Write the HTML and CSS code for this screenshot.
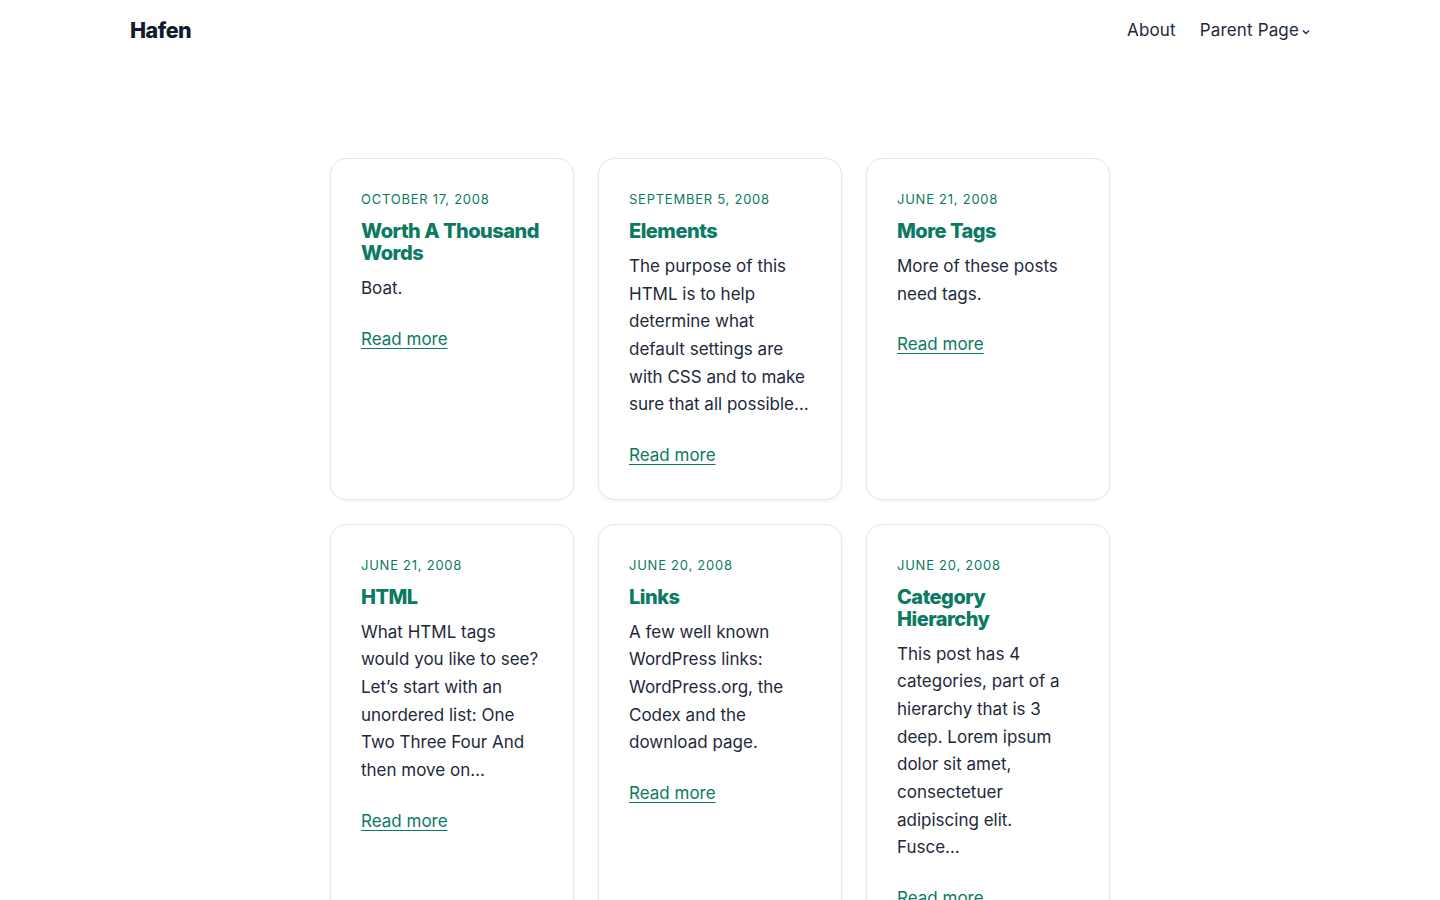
FILE: index.html
```html
<!DOCTYPE html>
<html lang="en">
<head>
    <meta charset="UTF-8">
    <meta name="viewport" content="width=device-width, initial-scale=1.0">
    <title>Hafen</title>
    <link rel="stylesheet" href="styles.css">
</head>
<body>
    <header class="site-header">
        <a class="site-title" href="#">Hafen</a>
        <nav class="site-nav">
            <a href="#">About</a>
            <a href="#" class="has-sub">Parent Page
                <svg class="chevron" width="10" height="12" viewBox="0 0 10 12"><path d="M2 4.5l3 3 3-3" fill="none" stroke="currentColor" stroke-width="1.3"/></svg>
            </a>
        </nav>
    </header>

    <main class="posts">
        <article class="card">
            <p class="date">October 17, 2008</p>
            <h2 class="title">Worth A Thousand Words</h2>
            <p class="excerpt">Boat.</p>
            <a class="more" href="#">Read more</a>
        </article>
        <article class="card">
            <p class="date">September 5, 2008</p>
            <h2 class="title">Elements</h2>
            <p class="excerpt">The purpose of this HTML is to help determine what default settings are with CSS and to make sure that all possible…</p>
            <a class="more" href="#">Read more</a>
        </article>
        <article class="card">
            <p class="date">June 21, 2008</p>
            <h2 class="title">More Tags</h2>
            <p class="excerpt">More of these posts need tags.</p>
            <a class="more" href="#">Read more</a>
        </article>
        <article class="card">
            <p class="date">June 21, 2008</p>
            <h2 class="title">HTML</h2>
            <p class="excerpt">What HTML tags would you like to see? Let’s start with an unordered list: One Two Three Four And then move on…</p>
            <a class="more" href="#">Read more</a>
        </article>
        <article class="card">
            <p class="date">June 20, 2008</p>
            <h2 class="title">Links</h2>
            <p class="excerpt">A few well known WordPress links: WordPress.org, the Codex and the download page.</p>
            <a class="more" href="#">Read more</a>
        </article>
        <article class="card">
            <p class="date">June 20, 2008</p>
            <h2 class="title">Category Hierarchy</h2>
            <p class="excerpt">This post has 4 categories, part of a hierarchy that is 3 deep. Lorem ipsum dolor sit amet, consectetuer adipiscing elit. Fusce…</p>
            <a class="more" href="#">Read more</a>
        </article>
    </main>
</body>
</html>
```

FILE: styles.css
```css
/* 全体 */
body {
    margin: 0;
    background: #fff;
    color: #1e293b;
    font-family: 'Inter', 'Liberation Sans', sans-serif;
}

a {
    color: inherit;
    text-decoration: none;
}

/* ヘッダー */
.site-header {
    display: flex;
    justify-content: space-between;
    align-items: center;
    padding: 16px 129px 16px 130px;
    height: 28px;
}

.site-title {
    font-size: 21.5px;
    font-weight: 800;
    letter-spacing: -0.5px;
    color: #111a2e;
}

.site-nav {
    display: flex;
    gap: 24px;
    font-size: 17px;
    letter-spacing: 0.15px;
    color: #1e293b;
}

.has-sub {
    display: flex;
    align-items: center;
    gap: 2px;
}

.chevron {
    margin-top: 3px;
}

/* 記事カード */
.posts {
    display: grid;
    grid-template-columns: repeat(3, 1fr);
    gap: 24px;
    width: 780px;
    margin: 98px auto 0;
}

.card {
    border: 1px solid #e5e7eb;
    border-radius: 16px;
    box-shadow: 0 1px 3px rgba(15, 23, 42, 0.06);
    padding: 29px 30px 30px;
}

.date {
    margin: 0 0 9px;
    font-size: 13px;
    line-height: 23px;
    letter-spacing: 0.75px;
    text-transform: uppercase;
    color: #0c7a63;
}

.title {
    margin: 0 0 11px;
    font-size: 20px;
    line-height: 22px;
    font-weight: 800;
    letter-spacing: -0.5px;
    color: #0c7a63;
}

.excerpt {
    margin: 0 0 23px;
    font-size: 17px;
    line-height: 1.625;
}

.more {
    display: inline-block;
    font-size: 17px;
    line-height: 27px;
    color: #0c7a63;
    text-decoration: underline;
    text-underline-offset: 3px;
    text-decoration-thickness: 1px;
}
```
